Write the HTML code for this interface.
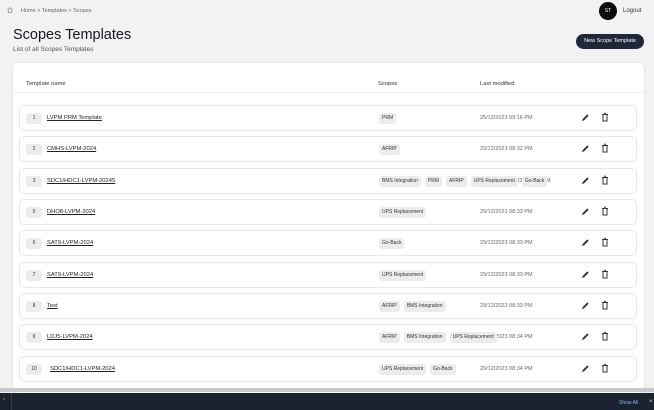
<!DOCTYPE html>
<html><head><meta charset="utf-8"><style>
*{margin:0;padding:0;box-sizing:border-box}
body{width:654px;height:410px;overflow:hidden;background:#f2f2f3;font-family:"Liberation Sans",sans-serif;position:relative;color:#222}
.a{position:absolute}
.bc{left:21px;top:8px;font-size:5.5px;color:#666}
.home{left:7px;top:7px;width:6px;height:6px}
h1{position:absolute;left:13px;top:27px;font-size:14.5px;font-weight:normal;color:#16191f}
.sub{left:13px;top:46px;font-size:6.5px;color:#555}
.av{left:599px;top:2px;width:18px;height:18px;border-radius:50%;background:#0b0b0b;color:#fff;font-size:5px;text-align:center;line-height:18px}
.lo{left:623px;top:8px;font-size:6px;color:#333}
.btn{left:576px;top:34px;width:68px;height:15px;border-radius:8px;background:#1f2838;color:#fff;font-size:5.5px;text-align:center;line-height:15px}
.card{left:13px;top:63px;width:631px;height:330px;background:#fff;border-radius:6px;box-shadow:0 0 2px rgba(0,0,0,.12)}
.th{top:81px;font-size:5.8px;color:#333}
.sep{left:13px;top:92px;width:631px;height:1px;background:#eee}
.row{left:19px;width:618px;height:26px;border:1px solid #e7e7e9;border-radius:5px;background:#fff;line-height:1}
.num{position:absolute;left:6px;top:7px;height:11px;min-width:16px;padding:0 4px;background:#ececec;border-radius:3px;font-size:5px;line-height:11px;text-align:center;color:#333}
.nm{position:absolute;top:10px;font-size:5.8px;color:#222;text-decoration:underline}
.tags{position:absolute;left:359px;top:7px;display:flex;white-space:nowrap;height:11px}
.tag{display:block;height:11px;padding:0 3px;background:#ececec;border-radius:3px;font-size:5px;line-height:11px;color:#333;margin-right:4px}
.dt{position:absolute;left:460px;top:10px;font-size:5.5px;color:#666}
.bar{left:0;top:388px;width:654px;height:4px;background:#c8c8c8}
.bot{left:0;top:393px;width:654px;height:17px;background:#1b2330}
</style></head><body>
<svg class="a home" viewBox="0 0 10 10"><path d="M1 5 L5 1 L9 5 M2 4.5 V9 H8 V4.5" fill="none" stroke="#777" stroke-width="1"/></svg>
<div class="a bc">Home &gt; Templates &gt; Scopes</div>
<h1>Scopes Templates</h1>
<div class="a sub">List of all Scopes Templates</div>
<div class="a av">ST</div>
<div class="a lo">Logout</div>
<div class="a btn">New Scope Template</div>
<div class="a card"></div>
<div class="a th" style="left:26px">Template name</div>
<div class="a th" style="left:378px">Scopes</div>
<div class="a th" style="left:480px">Last modified</div>
<div class="a sep"></div>

<div class="a row" style="top:105px"><span class="num">1</span><span class="nm" style="left:27px">LVPM PRM Template</span><div class="tags"><span class="tag">PRM</span></div><span class="dt">25/12/2023 09:16 PM</span></div>
<div class="a row" style="top:136px"><span class="num">2</span><span class="nm" style="left:27px">CMHS-LVPM-2024</span><div class="tags"><span class="tag">AFRIP</span></div><span class="dt">29/12/2023 08:32 PM</span></div>
<div class="a row" style="top:168px"><span class="num">3</span><span class="nm" style="left:27px">SDC1/HDC1-LVPM-20245</span><span class="dt" style="left:478px">29/12/2023 08:32 PM</span><div class="tags"><span class="tag">BMS Integration</span><span class="tag">PRM</span><span class="tag">AFRIP</span><span class="tag">UPS Replacement</span><span class="tag">Go-Back</span></div></div>
<div class="a row" style="top:199px"><span class="num">5</span><span class="nm" style="left:27px">DHO8-LVPM-2024</span><div class="tags"><span class="tag">UPS Replacement</span></div><span class="dt">29/12/2023 08:33 PM</span></div>
<div class="a row" style="top:230px"><span class="num">6</span><span class="nm" style="left:27px">SAT9-LVPM-2024</span><div class="tags"><span class="tag">Go-Back</span></div><span class="dt">29/12/2023 08:33 PM</span></div>
<div class="a row" style="top:262px"><span class="num">7</span><span class="nm" style="left:27px">SAT9-LVPM-2024</span><div class="tags"><span class="tag">UPS Replacement</span></div><span class="dt">29/12/2023 08:33 PM</span></div>
<div class="a row" style="top:293px"><span class="num">8</span><span class="nm" style="left:27px">Test</span><div class="tags"><span class="tag">AFRIP</span><span class="tag">BMS Integration</span></div><span class="dt">29/12/2023 08:33 PM</span></div>
<div class="a row" style="top:324px"><span class="num">9</span><span class="nm" style="left:27px">LDJ5-LVPM-2024</span><span class="dt">29/12/2023 08:34 PM</span><div class="tags"><span class="tag">AFRIP</span><span class="tag">BMS Integration</span><span class="tag">UPS Replacement</span></div></div>
<div class="a row" style="top:356px"><span class="num">10</span><span class="nm" style="left:30px">SDC1/HDC1-LVPM-2024</span><div class="tags"><span class="tag">UPS Replacement</span><span class="tag">Go-Back</span></div><span class="dt">29/12/2023 08:34 PM</span></div>

<svg width="0" height="0" style="position:absolute"><defs>
<g id="pen"><path d="M1 9 L2 6.5 L7 1.5 L8.5 3 L3.5 8 Z" fill="#333"/></g>
<g id="bin"><path d="M2 2.5 H8 M4 1.2 H6 M3 2.5 V9 H7 V2.5" fill="none" stroke="#333" stroke-width="1"/></g>
</defs></svg>
<svg class="a" style="left:581px;top:113px" width="9" height="9" viewBox="0 0 10 10"><use href="#pen"/></svg>
<svg class="a" style="left:600px;top:112px" width="10" height="10" viewBox="0 0 10 10"><use href="#bin"/></svg>
<svg class="a" style="left:581px;top:144px" width="9" height="9" viewBox="0 0 10 10"><use href="#pen"/></svg>
<svg class="a" style="left:600px;top:143px" width="10" height="10" viewBox="0 0 10 10"><use href="#bin"/></svg>
<svg class="a" style="left:581px;top:176px" width="9" height="9" viewBox="0 0 10 10"><use href="#pen"/></svg>
<svg class="a" style="left:600px;top:175px" width="10" height="10" viewBox="0 0 10 10"><use href="#bin"/></svg>
<svg class="a" style="left:581px;top:207px" width="9" height="9" viewBox="0 0 10 10"><use href="#pen"/></svg>
<svg class="a" style="left:600px;top:206px" width="10" height="10" viewBox="0 0 10 10"><use href="#bin"/></svg>
<svg class="a" style="left:581px;top:238px" width="9" height="9" viewBox="0 0 10 10"><use href="#pen"/></svg>
<svg class="a" style="left:600px;top:237px" width="10" height="10" viewBox="0 0 10 10"><use href="#bin"/></svg>
<svg class="a" style="left:581px;top:270px" width="9" height="9" viewBox="0 0 10 10"><use href="#pen"/></svg>
<svg class="a" style="left:600px;top:269px" width="10" height="10" viewBox="0 0 10 10"><use href="#bin"/></svg>
<svg class="a" style="left:581px;top:301px" width="9" height="9" viewBox="0 0 10 10"><use href="#pen"/></svg>
<svg class="a" style="left:600px;top:300px" width="10" height="10" viewBox="0 0 10 10"><use href="#bin"/></svg>
<svg class="a" style="left:581px;top:332px" width="9" height="9" viewBox="0 0 10 10"><use href="#pen"/></svg>
<svg class="a" style="left:600px;top:331px" width="10" height="10" viewBox="0 0 10 10"><use href="#bin"/></svg>
<svg class="a" style="left:581px;top:364px" width="9" height="9" viewBox="0 0 10 10"><use href="#pen"/></svg>
<svg class="a" style="left:600px;top:363px" width="10" height="10" viewBox="0 0 10 10"><use href="#bin"/></svg>
<div class="a bar"></div>
<div class="a bot"><span class="a" style="left:3px;top:5px;font-size:5px;color:#aaa">^</span><span class="a" style="left:11px;top:0;width:1px;height:17px;background:#333c4a"></span><span class="a" style="left:619px;top:7px;font-size:5px;color:#8ab4e8">Show All</span><span class="a" style="left:649px;top:6px;font-size:6px;color:#ccc">×</span></div>
</body></html>
